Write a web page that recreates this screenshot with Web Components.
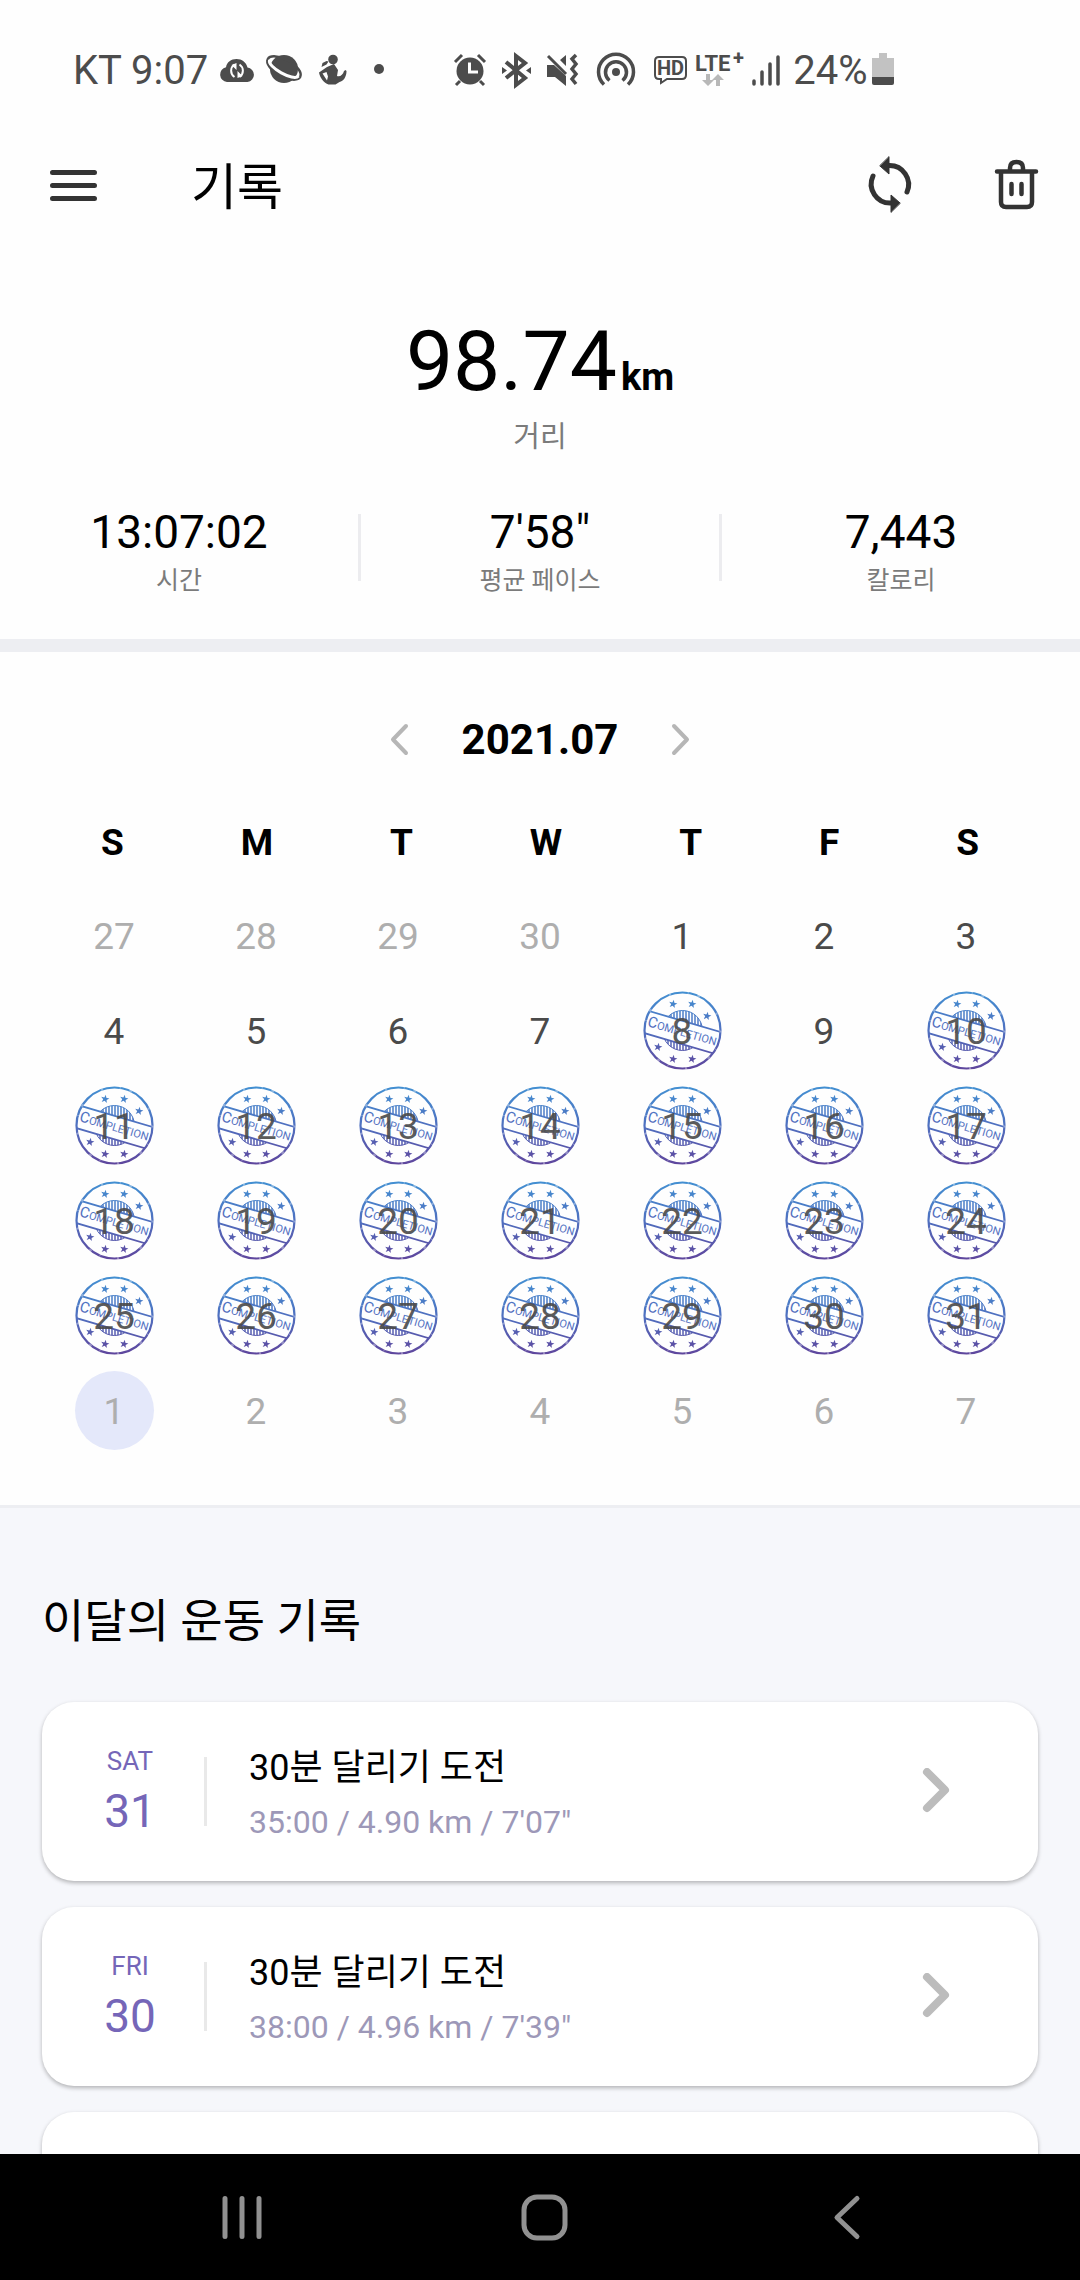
<!DOCTYPE html>
<html lang="ko">
<head>
<meta charset="utf-8">
<meta name="viewport" content="width=device-width, initial-scale=1">
<title>기록</title>
<style>
    body {
        margin: 0;
        background: #fefefe;
        color: #000;
        font-family: Roboto, "Noto Sans CJK KR", sans-serif;
    }
</style>
</head>
<body>
<run-app></run-app>

<script>
// Attaches an open shadow root filled with the given markup
class BaseElement extends HTMLElement {
    constructor() {
        super();
        this.attachShadow({ mode: 'open' });
    }

    connectedCallback() {
        const template = document.createElement('template');
        template.innerHTML = this.render();
        this.shadowRoot.replaceChildren(template.content.cloneNode(true));
    }
}

class StatusBar extends BaseElement {
    render() {
        return `
            <style>
                :host {
                    display: flex;
                    padding: 47px 0 1px 73px;
                    color: #4c4c4c;
                    font-size: 40px;
                    line-height: 48px;
                    white-space: nowrap;
                }

                div {
                    display: flex;
                    align-items: center;
                    gap: 10px;
                }

                .notices { gap: 11px; }
                .system { margin-left: 56px; }
                .network { margin-left: 17px; gap: 6px; }
                .wide { margin-left: 6px; }
                .level { margin-left: 12px; gap: 4px; }
                svg { display: block; overflow: visible; fill: currentColor; }
                .line { fill: none; stroke: currentColor; }
                text { font-weight: 700; }
            </style>
            <div class="notices">
                <span>KT 9:07</span>
                <svg width="36" height="48" viewBox="0 0 36 48">
                    <path d="M8 35a7.5 7.5 0 0 1-1-14.8C8 15 12 12 17.5 12S27 15 28.5 20.5A7.3 7.3 0 0 1 28.5 35z"/>
                    <path d="M15.5 17.5c-4.5 3-4.5 9.5 0 12.5M20.5 30c4.5-3 4.5-9.5 0-12.5" fill="none" stroke="#fefefe" stroke-width="2"/>
                    <path d="M17.5 16v7l-5-5zM18.5 31v-7l5 5z" fill="#fefefe"/>
                </svg>
                <svg width="36" height="48" viewBox="0 0 36 48">
                    <circle cx="18" cy="22" r="14"/>
                    <g transform="rotate(29 18 21)" fill="none">
                        <ellipse cx="18" cy="21" rx="18.5" ry="8.5" stroke="currentColor" stroke-width="2.5"/>
                        <path d="M1.5 21c1 7.5 32 7.5 33 0" stroke="#fefefe" stroke-width="3"/>
                    </g>
                </svg>
                <svg width="36" height="48" viewBox="0 0 36 48">
                    <circle cx="20" cy="12.5" r="4.8"/>
                    <path d="M15.500 14.500l-2 3-5 2.500 1-4 4-2zM14 20l7-3 4 6-1 6c3 1 6-1 7-5l1.500-1 1 1c0 6-3 10-7 11l-4 2.500h-7C11 36 7 31 6 25.500zM13.500 25l-4 1.500 4.500 7 1-4z" fill-rule="evenodd"/>
                </svg>
                <svg width="36" height="48" viewBox="0 0 36 48"><circle cx="19" cy="22" r="5"/></svg>
            </div>
            <div class="system">
                <svg width="36" height="48" viewBox="0 0 36 48">
                    <circle cx="18" cy="24" r="13.5"/>
                    <path class="line" d="M3 15l7-7M33 15l-7-7M8 34l-4 4M28 34l4 4" stroke-width="3"/>
                    <path d="M17.5 15.5V25H26" fill="none" stroke="#fefefe" stroke-width="3"/>
                </svg>
                <svg width="36" height="48" viewBox="0 0 36 48">
                    <path class="line" d="M8 15l19 16-9 7V9l9 7L8 31" stroke-width="4"/>
                    <path d="M4 20l5 3.5L4 27zM33 20l-5 3.5L33 27z"/>
                </svg>
                <svg width="36" height="48" viewBox="0 0 36 48">
                    <path d="M3 18h7l12 11v10L11 30H3zM22 8v11l-6-6z"/>
                    <path class="line" d="M4 9l18 18" stroke-width="3"/>
                    <path class="line" d="M32 8l-4 4 4 5-4 5 4 5-4 5 4 5" stroke-width="3.5"/>
                </svg>
                <svg class="wide" width="40" height="48" viewBox="0 0 40 48">
                    <circle cx="20" cy="25" r="4"/>
                    <path class="line" d="M8 37.5a17.5 17.5 0 1 1 24 0" stroke-width="3.5"/>
                    <path class="line" d="M13.5 33.5a10.5 10.5 0 1 1 13 0" stroke-width="3.5"/>
                </svg>
            </div>
            <div class="network">
                <svg width="36" height="48" viewBox="0 0 36 48">
                    <path class="line" d="M6 10h23q4 0 4 4v14q0 4-4 4H14l-6 4v-4H6q-4 0-4-4V14q0-4 4-4z" stroke-width="2"/>
                    <text x="4" y="28" font-size="20">HD</text>
                </svg>
                <svg width="50" height="48" viewBox="0 0 50 48">
                    <text x="0" y="24" font-size="22">LTE</text>
                    <text x="38" y="18" font-size="20">+</text>
                    <path d="M11 27h4v6h4l-6 6-6-6h4zM21 39h4v-6h4l-6-6-6 6h4z" fill="#b8b8b8"/>
                </svg>
                <svg width="30" height="48" viewBox="0 0 30 48">
                    <path class="line" d="M3 34v3M11 25v12M19 17v20M27 10v27" stroke-width="3.5" stroke-linecap="round"/>
                </svg>
            </div>
            <div class="level">
                <span>24%</span>
                <svg width="22" height="48" viewBox="0 0 22 48">
                    <path d="M7 6h8v5h7v19H0V11h7z" fill="#c2c2c2"/>
                    <path d="M0 30h22v6q0 2-2 2H2q-2 0-2-2z"/>
                </svg>
            </div>
        `;
    }
}

class AppHeader extends BaseElement {
    render() {
        return `
            <style>
                :host {
                    display: flex;
                    align-items: center;
                    height: 180px;
                    padding: 0 32px 0 42px;
                }

                h1 {
                    flex: 1;
                    margin: 4px 0 0 85px;
                    font-size: 50px;
                    font-weight: 400;
                    line-height: 64px;
                }

                button {
                    padding: 0;
                    border: 0;
                    background: none;
                    color: #333;
                }

                .sync { margin-right: 62px; }

                svg {
                    display: block;
                    fill: none;
                    stroke: currentColor;
                    stroke-width: 5;
                    stroke-linecap: round;
                }
            </style>
            <button aria-label="메뉴">
                <svg width="64" height="64" viewBox="0 0 64 64">
                    <path d="M10.5 18.5h42M10.5 31.5h42M10.5 44.5h42"/>
                </svg>
            </button>
            <h1><slot></slot></h1>
            <button class="sync" aria-label="동기화">
                <svg width="64" height="64" viewBox="0 0 64 64">
                    <path d="M31 11.5A19 19 0 0 1 49 38M15 22a19 19 0 0 0 18 27"/>
                    <path d="M31 3v17l-9-8zM33 58V41l9 8z" fill="currentColor" stroke-width="1"/>
                </svg>
            </button>
            <button aria-label="삭제">
                <svg width="64" height="64" viewBox="0 0 64 64">
                    <path d="M13 17.5h39M17 18v30q0 5 5 5h21q5 0 5-5V18M26 17v-3q0-6 6.5-6t6.5 6v3" stroke-width="4.5"/>
                    <path d="M27.5 30v10M37.5 30v10" stroke-width="4.5"/>
                </svg>
            </button>
        `;
    }
}

class StatItem extends BaseElement {
    render() {
        return `
            <style>
                :host {
                    display: block;
                    flex: 1;
                    text-align: center;
                    font-size: 46px;
                    line-height: 56px;
                }

                small {
                    display: block;
                    color: #7b7b7b;
                    font-size: 25px;
                    line-height: 42px;
                }
            </style>
            <slot></slot>
            <small>${this.getAttribute('label')}</small>
        `;
    }
}

class RunSummary extends BaseElement {
    render() {
        return `
            <style>
                :host {
                    display: block;
                    padding: 37px 0;
                    border-bottom: 13px solid #edeef2;
                }

                .distance {
                    display: flex;
                    justify-content: center;
                    align-items: baseline;
                    gap: 4px;
                    font-size: 84px;
                    line-height: 98px;
                }

                .distance b { font-size: 38px; line-height: 48px; }

                .label {
                    margin: 6px 0 47px;
                    color: #7b7b7b;
                    text-align: center;
                    font-size: 29px;
                    line-height: 40px;
                }

                .stats { display: flex; }

                .divider {
                    width: 3px;
                    height: 67px;
                    margin-top: 10px;
                    background: #ececef;
                }
            </style>
            <div class="distance"><span>98.74</span><b>km</b></div>
            <div class="label">거리</div>
            <div class="stats">
                <stat-item label="시간">13:07:02</stat-item>
                <span class="divider"></span>
                <stat-item label="평균 페이스">7'58"</stat-item>
                <span class="divider"></span>
                <stat-item label="칼로리">7,443</stat-item>
            </div>
        `;
    }
}

const STARS = [[30, 13], [49, 13], [64, 25], [15, 56], [30, 68], [49, 68]];

// Five-pointed star as an absolute polygon, so that all stars share one gradient
function starPoints(cx, cy) {
    const points = [];
    for (let i = 0; i < 10; i++) {
        const radius = i % 2 ? 1.8 : 4.4;
        const angle = (i * 36 - 78) * Math.PI / 180;
        points.push(`${(cx + radius * Math.cos(angle)).toFixed(1)},${(cy + radius * Math.sin(angle)).toFixed(1)}`);
    }
    return points.join(' ');
}

class CompletionStamp extends BaseElement {
    render() {
        const stars = STARS.map(([x, y]) => `<polygon points="${starPoints(x, y)}"/>`).join('');

        return `
            <style>
                :host { display: block; }
                svg { display: block; width: 100%; height: 100%; }
            </style>
            <svg viewBox="0 0 79 79">
                <defs>
                    <linearGradient id="ink" gradientUnits="userSpaceOnUse" x1="0" y1="0" x2="0" y2="79">
                        <stop offset="0" stop-color="#4290d2"/>
                        <stop offset="0.5" stop-color="#4f70c0"/>
                        <stop offset="1" stop-color="#5f459c"/>
                    </linearGradient>
                    <pattern id="hatch" width="3" height="79" patternUnits="userSpaceOnUse">
                        <path d="M1 0v79" stroke="url(#ink)" stroke-width="1.5"/>
                    </pattern>
                    <clipPath id="disc"><circle cx="39.5" cy="39.5" r="38"/></clipPath>
                </defs>
                <circle cx="39.5" cy="39.5" r="20" fill="url(#hatch)" stroke="url(#ink)"/>
                <g clip-path="url(#disc)">
                    <path d="M-6 16.5L86 43.5V67L-6 40z" fill="#fdfeff" stroke="url(#ink)" stroke-width="1.8"/>
                </g>
                <circle cx="39.5" cy="39.5" r="38" fill="none" stroke="url(#ink)" stroke-width="2.2"/>
                <circle cx="39.5" cy="39.5" r="38" fill="none" stroke="#fff" stroke-opacity="0.35" stroke-width="2.2" stroke-dasharray="2 17 1 9 3 23"/>
                <g fill="url(#ink)">
                    ${stars}
                    <text x="4" y="45" font-size="11" transform="rotate(16 39.5 39.5)"><tspan font-size="15">C</tspan>OMPLETION</text>
                </g>
            </svg>
        `;
    }
}

class MonthCalendar extends BaseElement {
    // July 2021, with the days of the neighbouring months
    days() {
        const days = [];
        for (let i = 0; i < 42; i++) {
            const date = new Date(2021, 5, 27 + i);
            const inMonth = date.getMonth() === 6;
            const day = date.getDate();
            days.push({
                day,
                muted: !inMonth,
                done: inMonth && (day === 8 || day >= 10),
                today: date.getMonth() === 7 && day === 1,
            });
        }
        return days;
    }

    renderDay({ day, muted, done, today }) {
        const classes = [muted ? 'muted' : '', today ? 'today' : ''].join(' ').trim();
        return `
            <td><button class="${classes}">
                ${done ? '<completion-stamp></completion-stamp>' : ''}<span>${day}</span>
            </button></td>`;
    }

    render() {
        const days = this.days();
        let rows = '';
        for (let i = 0; i < days.length; i += 7) {
            rows += `<tr>${days.slice(i, i + 7).map(this.renderDay).join('')}</tr>`;
        }

        return `
            <style>
                :host {
                    display: block;
                    padding: 64px 43px 47px;
                    border-bottom: 3px solid #edeef2;
                }

                .month {
                    display: flex;
                    justify-content: center;
                    align-items: center;
                    gap: 39px;
                    margin-bottom: 55px;
                }

                h2 { margin: 0; font-size: 42px; line-height: 48px; }

                button {
                    padding: 0;
                    border: 0;
                    background: none;
                    color: #4a4a4a;
                    font: inherit;
                }

                svg {
                    display: block;
                    fill: none;
                    stroke: #b6b6b6;
                    stroke-width: 4;
                    stroke-linecap: round;
                    stroke-linejoin: round;
                }

                table, thead, tbody { display: block; }
                table { font-size: 37px; line-height: 48px; }
                th, td { padding: 0; }

                thead tr {
                    display: flex;
                    justify-content: space-between;
                    margin-bottom: 21px;
                    padding: 0 58px;
                }

                tbody tr {
                    display: grid;
                    grid-template-columns: repeat(7, 1fr);
                    height: 95px;
                }

                td { display: grid; place-items: center; }

                td button {
                    display: grid;
                    place-items: center;
                    width: 79px;
                    height: 79px;
                    border-radius: 50%;
                }

                td button > * { grid-area: 1 / 1; }
                completion-stamp { width: 79px; height: 79px; }
                td span { padding-top: 2px; }
                completion-stamp + span { opacity: 0.9; }
                .muted { color: #aeaeae; }
                .today { background: #e4e8fa; }
            </style>
            <div class="month">
                <button aria-label="이전 달">
                    <svg width="48" height="48" viewBox="0 0 48 48"><path d="M31 10L18 23.5 31 37"/></svg>
                </button>
                <h2>2021.07</h2>
                <button aria-label="다음 달">
                    <svg width="48" height="48" viewBox="0 0 48 48"><path d="M17 10l13 13.5L17 37"/></svg>
                </button>
            </div>
            <table>
                <thead>
                    <tr><th>S</th><th>M</th><th>T</th><th>W</th><th>T</th><th>F</th><th>S</th></tr>
                </thead>
                <tbody>${rows}</tbody>
            </table>
        `;
    }
}

class RecordCard extends BaseElement {
    render() {
        return `
            <style>
                :host {
                    display: block;
                    min-height: 179px;
                    border-radius: 32px;
                    background: #fff;
                    box-shadow: 0 2px 4px rgba(0, 0, 0, 0.28);
                }
            </style>
            <slot></slot>
        `;
    }
}

class RecordEntry extends BaseElement {
    render() {
        return `
            <style>
                :host { display: block; }

                a {
                    display: flex;
                    align-items: center;
                    min-height: 179px;
                    padding: 0 80px 0 14px;
                    color: inherit;
                    text-decoration: none;
                }

                .date {
                    display: grid;
                    gap: 6px;
                    width: 148px;
                    color: #7566b8;
                    text-align: center;
                }

                .weekday { font-size: 26px; line-height: 32px; }
                .day { font-size: 46px; line-height: 56px; }
                .divider { width: 3px; height: 69px; background: #e9e9e9; }

                .body {
                    display: grid;
                    flex: 1;
                    gap: 10px;
                    padding: 2px 0 0 42px;
                }

                .title { font-size: 36px; line-height: 48px; }
                .detail { color: #9d98b8; font-size: 32px; line-height: 40px; }

                svg {
                    fill: none;
                    stroke: #bcbcbc;
                    stroke-width: 8;
                    stroke-linecap: round;
                    stroke-linejoin: round;
                }
            </style>
            <a href="#record-${this.getAttribute('day')}">
                <span class="date">
                    <span class="weekday">${this.getAttribute('weekday')}</span>
                    <span class="day">${this.getAttribute('day')}</span>
                </span>
                <span class="divider"></span>
                <span class="body">
                    <span class="title">${this.getAttribute('name')}</span>
                    <span class="detail"><slot></slot></span>
                </span>
                <svg width="44" height="48" viewBox="0 0 44 48"><path d="M13 4l18 18-18 18"/></svg>
            </a>
        `;
    }
}

class RecordList extends BaseElement {
    render() {
        return `
            <style>
                :host {
                    display: grid;
                    gap: 26px;
                    padding: 81px 42px 26px;
                    background: #f6f7fb;
                }

                h2 {
                    margin: 0 0 23px;
                    font-size: 46px;
                    font-weight: 400;
                    line-height: 64px;
                }
            </style>
            <h2>이달의 운동 기록</h2>
            <slot></slot>
        `;
    }
}

class SystemNav extends BaseElement {
    render() {
        return `
            <style>
                :host {
                    display: grid;
                    grid-template-columns: repeat(3, 1fr);
                    padding: 31px 82px 31px 91px;
                    background: #000;
                }

                button {
                    display: grid;
                    place-items: center;
                    padding: 0;
                    border: 0;
                    background: none;
                }

                svg {
                    fill: none;
                    stroke: #919191;
                    stroke-width: 5;
                    stroke-linecap: round;
                    stroke-linejoin: round;
                }
            </style>
            <button aria-label="최근 앱">
                <svg width="64" height="64" viewBox="0 0 64 64"><path d="M15 13.5v38M32 13.5v38M49 13.5v38"/></svg>
            </button>
            <button aria-label="홈">
                <svg width="64" height="64" viewBox="0 0 64 64"><rect x="12" y="12" width="41" height="41" rx="13"/></svg>
            </button>
            <button aria-label="뒤로">
                <svg width="64" height="64" viewBox="0 0 64 64"><path d="M42 13.5L22 32.5l20 19"/></svg>
            </button>
        `;
    }
}

class RunApp extends BaseElement {
    render() {
        return `
            <style>
                :host {
                    display: flex;
                    flex-direction: column;
                    height: 100vh;
                }

                main {
                    flex: 1;
                    min-height: 0;
                    overflow-y: auto;
                    scrollbar-width: none;
                }
            </style>
            <status-bar></status-bar>
            <app-header>기록</app-header>
            <main>
                <run-summary></run-summary>
                <month-calendar></month-calendar>
                <record-list>
                    <record-card>
                        <record-entry weekday="SAT" day="31" name="30분 달리기 도전">35:00 / 4.90 km / 7'07"</record-entry>
                    </record-card>
                    <record-card>
                        <record-entry weekday="FRI" day="30" name="30분 달리기 도전">38:00 / 4.96 km / 7'39"</record-entry>
                    </record-card>
                    <record-card></record-card>
                </record-list>
            </main>
            <system-nav></system-nav>
        `;
    }
}

customElements.define('status-bar', StatusBar);
customElements.define('app-header', AppHeader);
customElements.define('stat-item', StatItem);
customElements.define('run-summary', RunSummary);
customElements.define('completion-stamp', CompletionStamp);
customElements.define('month-calendar', MonthCalendar);
customElements.define('record-card', RecordCard);
customElements.define('record-entry', RecordEntry);
customElements.define('record-list', RecordList);
customElements.define('system-nav', SystemNav);
customElements.define('run-app', RunApp);
</script>
</body>
</html>
